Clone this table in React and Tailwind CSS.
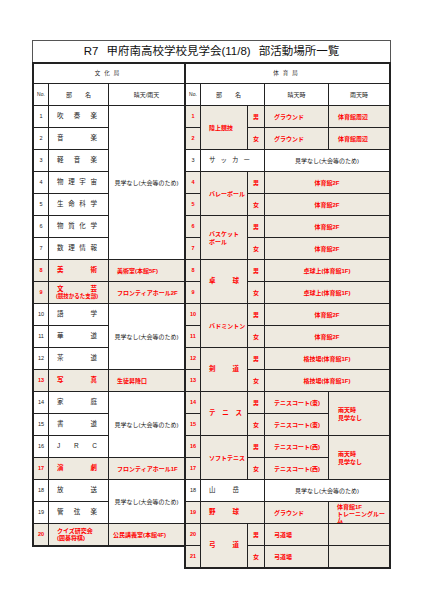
import React from "react";

const RED = "bg-[#eeeae0] text-[#ff0000] font-bold";
const WHITE = "bg-white text-[#222]";

function Cell({ className = "", children }) {
  return <div className={`flex items-center ${className}`}>{children}</div>;
}

function Spread({ chars, className = "" }) {
  return (
    <div className={`flex justify-between ${className}`}>
      {chars.map((c, i) => (
        <span key={i}>{c}</span>
      ))}
    </div>
  );
}

function No({ n, red }) {
  return (
    <Cell className={`justify-center text-[5.5px] ${red ? RED : WHITE}`}>{n}</Cell>
  );
}

function LName({ chars, red }) {
  return (
    <Cell className={`pl-[8px] ${red ? RED : WHITE}`}>
      <Spread chars={chars} className="w-[40px] text-[6.5px]" />
    </Cell>
  );
}

function LeftGrid() {
  const black = (n, chars) => [
    <No key={`n${n}`} n={n} />,
    <LName key={`m${n}`} chars={chars} />,
  ];
  return (
    <div className="grid grid-cols-[14px_59px_75px] grid-rows-[19px_21px_repeat(20,21px)] gap-px bg-[#222] border-2 border-r-0 border-[#222] text-[6px] leading-none">
      <Cell className={`col-span-3 justify-center ${WHITE}`}>
        <span className="tracking-[4px] text-[5.5px]">文化局</span>
      </Cell>
      <Cell className={`justify-center text-[5px] ${WHITE}`}>No.</Cell>
      <Cell className={`justify-center ${WHITE}`}>
        <Spread chars={["部", "名"]} className="w-[25px]" />
      </Cell>
      <Cell className={`justify-center ${WHITE}`}>晴天/雨天</Cell>

      {black(1, ["吹", "奏", "楽"])}
      <Cell className={`row-span-7 justify-center ${WHITE}`}>見学なし(大会等のため)</Cell>
      {black(2, ["音", "楽"])}
      {black(3, ["軽", "音", "楽"])}
      {black(4, ["物", "理", "宇", "宙"])}
      {black(5, ["生", "命", "科", "学"])}
      {black(6, ["物", "質", "化", "学"])}
      {black(7, ["数", "理", "情", "報"])}

      <No n={8} red />
      <LName chars={["美", "術"]} red />
      <Cell className={`pl-[8px] ${RED}`}>美術室(本館5F)</Cell>

      <No n={9} red />
      <div className={`flex flex-col justify-center pl-[7px] ${RED}`}>
        <Spread chars={["文", "芸"]} className="w-[41px] pl-px text-[6.5px]" />
        <span className="text-[5.5px] mt-[1px] whitespace-nowrap">(競技かるた支部)</span>
      </div>
      <Cell className={`pl-[8px] ${RED}`}>フロンティアホール2F</Cell>

      {black(10, ["語", "学"])}
      <Cell className={`row-span-3 justify-center ${WHITE}`}>見学なし(大会等のため)</Cell>
      {black(11, ["華", "道"])}
      {black(12, ["茶", "道"])}

      <No n={13} red />
      <LName chars={["写", "真"]} red />
      <Cell className={`pl-[8px] ${RED}`}>生徒昇降口</Cell>

      {black(14, ["家", "庭"])}
      <Cell className={`row-span-3 justify-center ${WHITE}`}>見学なし(大会等のため)</Cell>
      {black(15, ["書", "道"])}
      {black(16, ["J", "R", "C"])}

      <No n={17} red />
      <LName chars={["演", "劇"]} red />
      <Cell className={`pl-[8px] ${RED}`}>フロンティアホール1F</Cell>

      {black(18, ["放", "送"])}
      <Cell className={`row-span-2 justify-center ${WHITE}`}>見学なし(大会等のため)</Cell>
      {black(19, ["管", "弦", "楽"])}

      <No n={20} red />
      <div className={`flex flex-col justify-center pl-[8px] ${RED}`}>
        <span>クイズ研究会</span>
        <span className="mt-[1px]">(囲碁将棋)</span>
      </div>
      <Cell className={`pl-[4px] ${RED}`}>公民講義室(本館4F)</Cell>
    </div>
  );
}

function RName({ children, className = "" }) {
  return <Cell className={`pl-[8px] ${RED} ${className}`}>{children}</Cell>;
}

function Sex({ s }) {
  return <Cell className={`justify-center ${RED}`}>{s}</Cell>;
}

function Left({ children }) {
  return <Cell className={`pl-[9px] ${RED}`}>{children}</Cell>;
}

function Span2({ children }) {
  return <Cell className={`col-span-2 justify-center ${RED}`}>{children}</Cell>;
}

function RightGrid() {
  return (
    <div className="grid grid-cols-[14px_46px_16px_63px_60px] grid-rows-[19px_21px_repeat(21,21px)] gap-px bg-[#222] border-2 border-[#222] text-[6px] leading-none">
      <Cell className={`col-span-5 justify-center ${WHITE}`}>
        <span className="tracking-[4px] text-[5.5px]">体育局</span>
      </Cell>
      <Cell className={`justify-center text-[5px] ${WHITE}`}>No.</Cell>
      <Cell className={`col-span-2 justify-center ${WHITE}`}>
        <Spread chars={["部", "名"]} className="w-[25px] mr-[8px]" />
      </Cell>
      <Cell className={`justify-center ${WHITE}`}>晴天時</Cell>
      <Cell className={`justify-center ${WHITE}`}>雨天時</Cell>

      <No n={1} red />
      <RName className="row-span-2">陸上競技</RName>
      <Sex s="男" />
      <Left>グラウンド</Left>
      <Left>体育館周辺</Left>
      <No n={2} red />
      <Sex s="女" />
      <Left>グラウンド</Left>
      <Left>体育館周辺</Left>

      <No n={3} />
      <Cell className={`col-span-2 pl-[8px] ${WHITE}`}>
        <Spread chars={["サ", "ッ", "カ", "ー"]} className="w-[41px] text-[6.5px]" />
      </Cell>
      <Cell className={`col-span-2 justify-center ${WHITE}`}>見学なし(大会等のため)</Cell>

      <No n={4} red />
      <RName className="row-span-2">バレーボール</RName>
      <Sex s="男" />
      <Span2>体育館2F</Span2>
      <No n={5} red />
      <Sex s="女" />
      <Span2>体育館2F</Span2>

      <No n={6} red />
      <div className={`row-span-2 flex flex-col justify-center pl-[8px] leading-[8px] ${RED}`}>
        <span>バスケット</span>
        <span>ボール</span>
      </div>
      <Sex s="男" />
      <Span2>体育館2F</Span2>
      <No n={7} red />
      <Sex s="女" />
      <Span2>体育館2F</Span2>

      <No n={8} red />
      <RName className="row-span-2">
        <Spread chars={["卓", "球"]} className="w-[30px] text-[6.5px]" />
      </RName>
      <Sex s="男" />
      <Span2>卓球上(体育館1F)</Span2>
      <No n={9} red />
      <Sex s="女" />
      <Span2>卓球上(体育館1F)</Span2>

      <No n={10} red />
      <RName className="row-span-2">バドミントン</RName>
      <Sex s="男" />
      <Span2>体育館2F</Span2>
      <No n={11} red />
      <Sex s="女" />
      <Span2>体育館2F</Span2>

      <No n={12} red />
      <RName className="row-span-2">
        <Spread chars={["剣", "道"]} className="w-[30px] text-[6.5px]" />
      </RName>
      <Sex s="男" />
      <Span2>格技場(体育館1F)</Span2>
      <No n={13} red />
      <Sex s="女" />
      <Span2>格技場(体育館1F)</Span2>

      <No n={14} red />
      <RName className="row-span-2">
        <Spread chars={["テ", "ニ", "ス"]} className="w-[33px] text-[6.5px]" />
      </RName>
      <Sex s="男" />
      <Left>テニスコート(東)</Left>
      <div className={`row-span-2 flex flex-col justify-center pl-[9px] leading-[8px] ${RED}`}>
        <span>雨天時</span>
        <span>見学なし</span>
      </div>
      <No n={15} red />
      <Sex s="女" />
      <Left>テニスコート(東)</Left>

      <No n={16} red />
      <RName className="row-span-2">ソフトテニス</RName>
      <Sex s="男" />
      <Left>テニスコート(西)</Left>
      <div className={`row-span-2 flex flex-col justify-center pl-[9px] leading-[8px] ${RED}`}>
        <span>雨天時</span>
        <span>見学なし</span>
      </div>
      <No n={17} red />
      <Sex s="女" />
      <Left>テニスコート(西)</Left>

      <No n={18} />
      <Cell className={`col-span-2 pl-[8px] ${WHITE}`}>
        <Spread chars={["山", "岳"]} className="w-[30px] text-[6.5px]" />
      </Cell>
      <Cell className={`col-span-2 justify-center ${WHITE}`}>見学なし(大会等のため)</Cell>

      <No n={19} red />
      <Cell className={`col-span-2 pl-[8px] ${RED}`}>
        <Spread chars={["野", "球"]} className="w-[30px] text-[6.5px]" />
      </Cell>
      <Left>グラウンド</Left>
      <div className={`flex flex-col pt-[2px] pl-[8px] pr-[2px] leading-[6.5px] ${RED}`}>
        <span>体育館1F</span>
        <span>トレーニングルーム</span>
      </div>

      <No n={20} red />
      <RName className="row-span-2">
        <Spread chars={["弓", "道"]} className="w-[30px] text-[6.5px]" />
      </RName>
      <Sex s="男" />
      <Left>弓道場</Left>
      <div className={RED}></div>
      <No n={21} red />
      <Sex s="女" />
      <Left>弓道場</Left>
      <div className={RED}></div>
    </div>
  );
}

export default function App() {
  return (
    <div className="min-h-[600px] bg-white pt-[40px] pl-[32px] font-['Liberation_Sans','Noto_Sans_CJK_JP',sans-serif] text-[#222]">
      <div className="w-[359px] h-[22px] border border-b-0 border-[#555] flex items-center justify-center text-[11.5px] leading-none text-[#111]">
        <span className="mr-[8px]">R7</span>
        <span>甲府南高校学校見学会(11/8)</span>
        <span className="ml-[8px]">部活動場所一覧</span>
      </div>
      <div className="flex items-start">
        <LeftGrid />
        <RightGrid />
      </div>
    </div>
  );
}
